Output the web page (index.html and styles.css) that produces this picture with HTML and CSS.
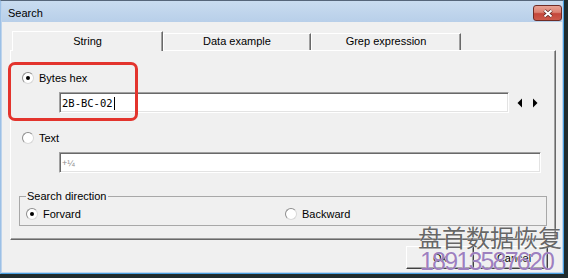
FILE: index.html
```html
<!DOCTYPE html>
<html lang="en">
<head>
    <meta charset="UTF-8">
    <title>Search</title>
    <link rel="stylesheet" href="styles.css">
</head>
<body>
    <div class="window">
        <div class="titlebar">
            <span class="title">Search</span>
            <span class="close">
                <svg width="12" height="9" viewBox="0 0 12 9">
                    <path d="M2.5 1.5 L9.5 7.5 M9.5 1.5 L2.5 7.5" stroke="#5a2420" stroke-width="3.6" fill="none"/>
                    <path d="M2.5 1.5 L9.5 7.5 M9.5 1.5 L2.5 7.5" stroke="#fff" stroke-width="2" fill="none"/>
                </svg>
            </span>
        </div>
        <div class="client">
            <div class="tabs">
                <div class="tab active tab-string">String</div>
                <div class="tab tab-data">Data example</div>
                <div class="tab tab-grep">Grep expression</div>
            </div>
            <div class="panel">
                <div class="highlight"></div>

                <label class="option"><span class="radio on"></span>Bytes hex</label>
                <div class="field-row">
                    <div class="field">2B-BC-02<span class="caret"></span></div>
                    <svg class="arrows" width="22" height="10" viewBox="0 0 22 10">
                        <polygon points="5,0.5 5,9.5 0.5,5" fill="#000"/>
                        <polygon points="16,0.5 20.5,5 16,9.5" fill="#000"/>
                    </svg>
                </div>

                <label class="option option-text"><span class="radio"></span>Text</label>
                <div class="field-row">
                    <div class="field wide"><span class="hint">+¼</span></div>
                </div>

                <fieldset class="group">
                    <legend>Search direction</legend>
                    <div class="choices">
                        <label class="option"><span class="radio on"></span>Forvard</label>
                        <label class="option"><span class="radio"></span>Backward</label>
                    </div>
                </fieldset>
            </div>
            <div class="buttons">
                <button type="button">Ok</button>
                <button type="button">Cancel</button>
            </div>
        </div>
    </div>

    <!-- watermark stamped over the screenshot -->
    <div class="wm-cn">盘首数据恢复</div>
    <div class="wm-num">18913587620</div>
</body>
</html>
```

FILE: styles.css
```css
body {
    margin: 0;
    width: 568px;
    height: 278px;
    overflow: hidden;
    position: relative;
    background-color: #1f2b2d;
    font-family: "Liberation Sans", Arial, sans-serif;
    font-size: 11px;
    color: #000;
}
.window {
    box-sizing: border-box;
    width: 564px;
    height: 274px;
    border: 1px solid #4aa0e0;
    border-top-color: #56667a;
    border-left-color: #9cc0e6;
    padding: 0 1px 1px;
    background-color: #bed4ec;
}
.titlebar {
    height: 21px;
    display: flex;
    align-items: flex-start;
    background: linear-gradient(#c9dcf0, #b8cfe9);
}
.title {
    padding: 5px 0 0 6px;
    line-height: 14px;
    font-size: 11px;
}
.close {
    box-sizing: border-box;
    margin: 4px 0 0 auto;
    width: 29px;
    height: 16px;
    border: 1px solid #6e2c26;
    border-radius: 3px;
    background: linear-gradient(#e8a294 0%, #dc8273 45%, #c4463a 55%, #cd5a4b 100%);
    display: flex;
    align-items: center;
    justify-content: center;
}
.client {
    box-sizing: border-box;
    height: 250px;
    background-color: #f0f0f0;
    padding: 9px 6px 0 8px;
}

/* tabs */
.tabs {
    display: flex;
    align-items: flex-end;
    height: 19px;
    margin-left: 2px;
    position: relative;
    z-index: 1;
}
.tab {
    box-sizing: border-box;
    height: 17px;
    border-top: 1px solid #fff;
    border-left: 1px solid #fff;
    border-right: 1px solid #696969;
    box-shadow: inset -1px 0 #a0a0a0;
    text-align: center;
    line-height: 15px;
}
.tab.active {
    height: 20px;
    margin-bottom: -1px;
    padding-top: 2px;
    background-color: #f0f0f0;
}
.tab-string { width: 151px; }
.tab-data { width: 148px; }
.tab-grep { width: 150px; }

.panel {
    position: relative;
    box-sizing: border-box;
    width: 546px;
    height: 190px;
    border: 1px solid;
    border-color: #fff #696969 #696969 #fff;
    box-shadow: inset -1px -1px #a0a0a0;
    padding: 20px 0 0 11px;
}
.highlight {
    position: absolute;
    left: -3px;
    top: 11px;
    box-sizing: border-box;
    width: 130px;
    height: 59px;
    border: 3px solid #e3342d;
    border-radius: 7px;
}
.option {
    display: flex;
    align-items: center;
    gap: 5px;
    height: 14px;
    line-height: 14px;
}
.option-text {
    margin-top: 18px;
}
.radio {
    position: relative;
    flex: none;
    box-sizing: border-box;
    width: 12px;
    height: 12px;
    border-radius: 50%;
    border: 1px solid;
    border-color: #8d8d8d #d8d8d8 #d8d8d8 #8d8d8d;
    background-color: #fff;
}
.radio.on::after {
    content: "";
    position: absolute;
    left: 3px;
    top: 3px;
    width: 4px;
    height: 4px;
    border-radius: 50%;
    background-color: #000;
}
.field-row {
    display: flex;
    align-items: center;
    margin: 7px 0 0 37px;
}
.field {
    box-sizing: border-box;
    display: flex;
    align-items: center;
    width: 450px;
    height: 21px;
    border: 1px solid;
    border-color: #a0a0a0 #fff #fff #a0a0a0;
    box-shadow: inset 1px 1px #696969, inset -1px -1px #e3e3e3;
    background-color: #fff;
    padding: 1px 0 0 2px;
    font-family: "DejaVu Sans Mono", monospace;
    font-size: 10.5px;
}
.field.wide {
    width: 482px;
}
.caret {
    display: inline-block;
    width: 1px;
    height: 13px;
    margin-left: 1px;
    background-color: #000;
}
.hint {
    color: #8c8c8c;
    font-family: "Liberation Sans", Arial, sans-serif;
    font-size: 9px;
}
.arrows {
    margin-left: 8px;
}

/* group box */
.group {
    box-sizing: border-box;
    width: 528px;
    margin: 17px 0 0 -3px;
    padding: 5px 0 4px 6px;
    border: 1px solid #a8a8a8;
}
.group legend {
    padding: 0 1px;
    line-height: 12px;
}
.choices {
    display: flex;
}
.choices .option:first-child {
    width: 259px;
}

.buttons {
    display: flex;
    justify-content: flex-end;
    gap: 6px;
    margin: 6px 8px 0 0;
}
.buttons button {
    box-sizing: border-box;
    width: 68px;
    height: 23px;
    padding: 0;
    font: inherit;
    color: #000;
    background-color: #f0f0f0;
    border: 1px solid;
    border-color: #fff #404040 #404040 #fff;
    box-shadow: inset -1px -1px #a0a0a0;
}

/* watermark */
.wm-cn {
    position: absolute;
    left: 418px;
    top: 225px;
    font-family: "Noto Sans CJK SC", sans-serif;
    font-size: 24px;
    line-height: 24px;
    color: rgba(75, 75, 75, 0.85);
    text-shadow: 0 0 1px #fff;
}
.wm-num {
    position: absolute;
    left: 420px;
    top: 249px;
    font-family: "Liberation Sans", Arial, sans-serif;
    font-size: 25px;
    line-height: 25px;
    letter-spacing: -1.8px;
    color: rgba(140, 105, 180, 0.85);
    text-shadow: 0 0 1px #fff;
}
```
